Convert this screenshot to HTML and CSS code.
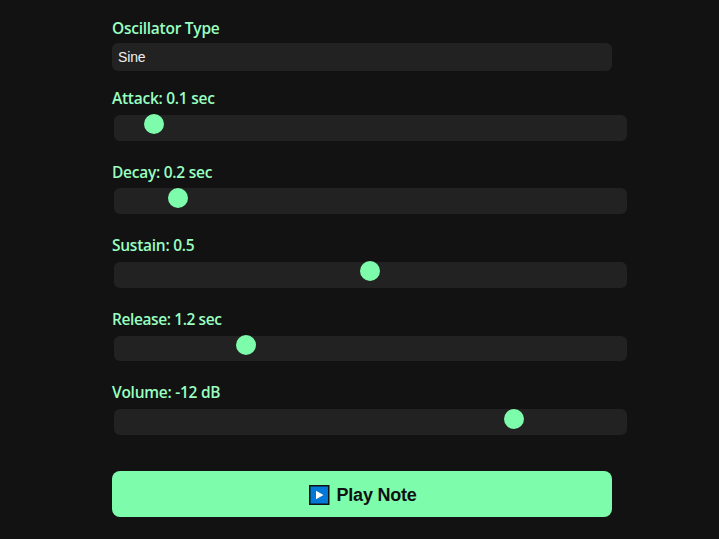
FILE: index.html
```html
<!DOCTYPE html>
<html lang="en">
<head>
<meta charset="utf-8">
<title>Synth</title>
<link rel="stylesheet" href="styles.css">
</head>
<body>
<main class="synth">
  <div class="field"><label class="name">Oscillator Type</label><div class="select">Sine</div></div>
  <div class="field control"><label class="name">Attack: 0.1 sec</label><div class="track"><span class="thumb" style="margin-left:30px"></span></div></div>
  <div class="field control"><label class="name">Decay: 0.2 sec</label><div class="track"><span class="thumb" style="margin-left:54px"></span></div></div>
  <div class="field control"><label class="name">Sustain: 0.5</label><div class="track"><span class="thumb" style="margin-left:246px"></span></div></div>
  <div class="field control"><label class="name tight">Release: 1.2 sec</label><div class="track"><span class="thumb" style="margin-left:122px"></span></div></div>
  <div class="field control"><label class="name">Volume: -12 dB</label><div class="track"><span class="thumb" style="margin-left:390px"></span></div></div>
  <button class="play"><svg class="icon" viewBox="0 0 21 20"><rect x=".75" y=".75" width="19" height="18.5" fill="#0078d7" stroke="#111" stroke-width="1.5"/><path d="M7 5.7v8.6l7.5-4.3z" fill="#fff"/></svg><span class="caption">Play Note</span></button>
</main>
</body>
</html>
```

FILE: styles.css
```css
* { box-sizing: border-box; }
body { margin: 0; background: #121212; overflow: hidden; font-family: "Open Sans", sans-serif; }
.synth { width: 500px; margin-left: 112px; padding-top: 17px; }
.name { display: block; height: 22px; line-height: 23px; font-size: 15.5px; font-weight: 600; letter-spacing: -.26px; color: #98ffc0; white-space: nowrap; }
.tight { letter-spacing: -.4px; }
.select { margin-top: 4px; height: 28px; padding-left: 6px; border-radius: 6px; background: #222; color: #eee; font: 14px/29px "Liberation Sans", sans-serif; letter-spacing: -.15px; }
.field { height: 70px; }
.control { height: 73.58px; }
.track { display: flex; width: 513px; height: 25.8px; margin: 5.8px 0 0 2px; border-radius: 6px; background: #222; }
.thumb { width: 20px; height: 20px; margin-top: -.5px; border-radius: 50%; background: #7dfcab; }
.play { display: flex; align-items: center; justify-content: center; gap: 7px; width: 500px; height: 46px; margin-top: 16.1px; padding: 2px 0 0 1px; border: 0; border-radius: 8px; background: #7dfcab; color: #111; font: bold 18px "Liberation Sans", sans-serif; letter-spacing: -.25px; }
.caption { padding-top: 1.5px; }
.icon { width: 21px; height: 20px; }
```
